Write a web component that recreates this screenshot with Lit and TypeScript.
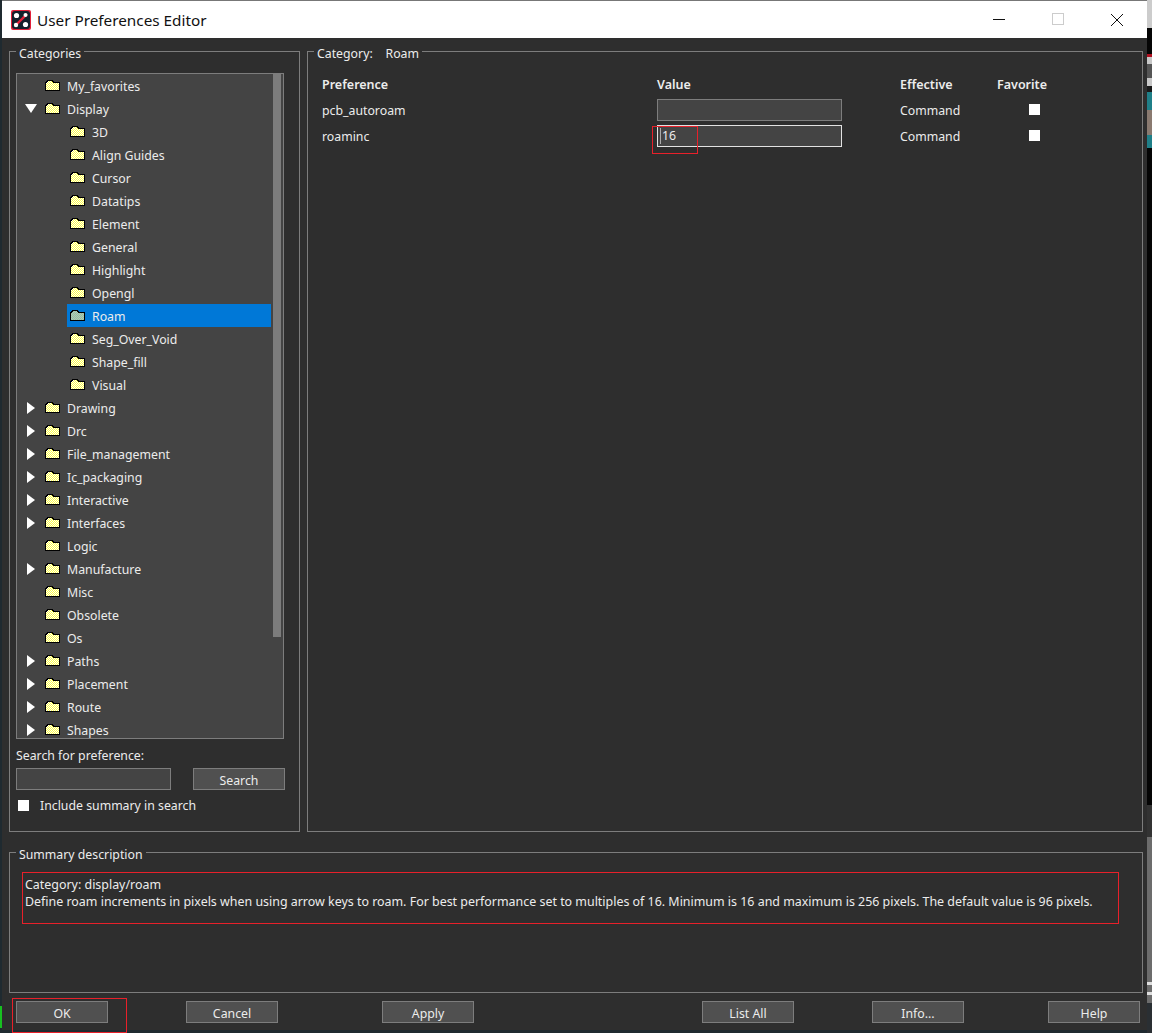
import { LitElement, html, css, svg } from 'lit';
import { customElement } from 'lit/decorators.js';

type Node = { label: string; depth: number; arrow?: 'open' | 'closed'; selected?: boolean };

const TREE: Node[] = [
  { label: 'My_favorites', depth: 0 },
  { label: 'Display', depth: 0, arrow: 'open' },
  { label: '3D', depth: 1 },
  { label: 'Align Guides', depth: 1 },
  { label: 'Cursor', depth: 1 },
  { label: 'Datatips', depth: 1 },
  { label: 'Element', depth: 1 },
  { label: 'General', depth: 1 },
  { label: 'Highlight', depth: 1 },
  { label: 'Opengl', depth: 1 },
  { label: 'Roam', depth: 1, selected: true },
  { label: 'Seg_Over_Void', depth: 1 },
  { label: 'Shape_fill', depth: 1 },
  { label: 'Visual', depth: 1 },
  { label: 'Drawing', depth: 0, arrow: 'closed' },
  { label: 'Drc', depth: 0, arrow: 'closed' },
  { label: 'File_management', depth: 0, arrow: 'closed' },
  { label: 'Ic_packaging', depth: 0, arrow: 'closed' },
  { label: 'Interactive', depth: 0, arrow: 'closed' },
  { label: 'Interfaces', depth: 0, arrow: 'closed' },
  { label: 'Logic', depth: 0 },
  { label: 'Manufacture', depth: 0, arrow: 'closed' },
  { label: 'Misc', depth: 0 },
  { label: 'Obsolete', depth: 0 },
  { label: 'Os', depth: 0 },
  { label: 'Paths', depth: 0, arrow: 'closed' },
  { label: 'Placement', depth: 0, arrow: 'closed' },
  { label: 'Route', depth: 0, arrow: 'closed' },
  { label: 'Shapes', depth: 0, arrow: 'closed' },
];

const BUTTONS = [
  { label: 'OK', gap: 78 },
  { label: 'Cancel', gap: 104 },
  { label: 'Apply', gap: 228 },
  { label: 'List All', gap: 78 },
  { label: 'Info...', gap: 84 },
  { label: 'Help', gap: 0 },
];

// the folders are dithered, two colours in a 2px checker
function folder(a: string, b: string, id: string) {
  return html`<svg class="folder" width="15" height="11" viewBox="0 0 15 11" shape-rendering="crispEdges">
    ${svg`<defs><pattern id="${id}" width="2" height="2" patternUnits="userSpaceOnUse">
      <rect width="2" height="2" fill="${a}"/><rect width="1" height="1" fill="${b}"/><rect x="1" y="1" width="1" height="1" fill="${b}"/>
    </pattern></defs>
    <path d="M.5 10.5V2.5H1.5V1.5H2.5V.5H7.5V1.5H8.5V2.5H14.5V10.5Z" fill="url(#${id})" stroke="#000"/>
    <path d="M1 10.5H15" stroke="#000"/>`}
  </svg>`;
}

function logo() {
  return html`<svg width="20" height="20" viewBox="0 0 20 20">
    <rect width="20" height="20" rx="2" fill="#e0203a"/>
    <rect x="1" y="1" width="18" height="18" rx="3" fill="#14202c"/>
    <path d="M4 16L16 4" stroke="#e8203a" stroke-width="2.4"/>
    <circle cx="5.5" cy="5.5" r="2.6" fill="#fff"/>
    <circle cx="14.5" cy="5" r="2" fill="#fff"/>
    <circle cx="5" cy="15" r="2.2" fill="#fff"/>
    <circle cx="14.5" cy="14.5" r="2.6" fill="#fff"/>
  </svg>`;
}

@customElement('app-root')
export class AppRoot extends LitElement {
  static styles = css`
    :host {
      display: block;
      position: relative;
      width: 1152px;
      height: 1033px;
      overflow: hidden;
      background: #1f2a30;
      font-family: "Noto Sans", "Open Sans", sans-serif;
      font-size: 12.3px;
      line-height: 18px;
      color: #ececec;
    }
    .window {
      width: 1145px;
      height: 1029px;
      margin-left: 2px;
      border-top: 1px solid #777;
      display: flex;
      flex-direction: column;
      background: #2e2e2e;
    }
    .titlebar {
      height: 37px;
      flex: none;
      background: #fff;
      color: #111;
      display: flex;
      align-items: center;
      padding-left: 9px;
      gap: 6px;
      font-size: 15.3px;
    }
    .titlebar .title { flex: 1; }
    .captions { display: flex; padding-right: 1px; }
    .caption {
      width: 59px;
      display: flex;
      justify-content: center;
    }
    .caption svg { display: block; }
    .content {
      flex: 1;
      padding: 1px 2px 0 7px;
      display: flex;
      flex-direction: column;
    }
    .top {
      display: flex;
      gap: 7px;
      height: 793px;
    }
    fieldset {
      margin: 0;
      border: 1px solid #7d7d7d;
      padding: 0;
      min-width: 0;
    }
    /* top padding drops the caption below the middle of the border line */
    legend {
      padding: 6px 3px 0;
      line-height: 18px;
    }
    .categories {
      width: 291px;
      height: 793px;
      box-sizing: border-box;
      padding: 10px 15px 0 6px;
    }
    .categories legend { margin-left: 0; }
    .category legend { margin-left: -8px; }
    .summary legend { margin-left: -9px; }
    .tree {
      height: 664px;
      border: 1px solid #7d7d7d;
      background: #444;
      position: relative;
      overflow: hidden;
    }
    .scrollbar {
      position: absolute;
      top: 0;
      right: 2px;
      width: 8px;
      height: 563px;
      background: #7c7c7c;
    }
    .row {
      height: 23px;
      display: flex;
      align-items: center;
      position: relative;
    }
    .arrow {
      width: 20px;
      margin-left: 8px;
      flex: none;
    }
    .arrow svg { display: block; }
    .arrow .closed { margin-left: 2px; }
    .folder { flex: none; display: block; margin-right: 7px; position: relative; }
    .label {
      flex: 1;
      height: 23px;
      line-height: 26px;
      white-space: nowrap;
      position: relative;
    }
    .highlight {
      position: absolute;
      left: 50px;
      width: 204px;
      top: 0;
      height: 23px;
      background: #0078d7;
    }
    .search-label { margin-top: 8px; }
    .search-row {
      display: flex;
      justify-content: space-between;
      margin: 3px -1px 0 0;
    }
    .input {
      box-sizing: border-box;
      border: 1px solid #7d7d7d;
      background: #444;
      height: 22px;
    }
    .search-input { width: 155px; }
    .btn {
      box-sizing: border-box;
      width: 92px;
      height: 22px;
      border: 1px solid #7d7d7d;
      background: #505050;
      text-align: center;
      line-height: 23px;
      flex: none;
    }
    .include {
      display: flex;
      align-items: center;
      gap: 11px;
      margin: 5px 0 0 2px;
      height: 20px;
    }
    .include .txt { padding-top: 2px; }
    .check {
      display: block;
      width: 11px;
      height: 11px;
      background: #fff;
      flex: none;
    }
    .category {
      width: 836px;
      height: 793px;
      box-sizing: border-box;
      padding: 11px 14px 0;
    }
    .grid {
      display: grid;
      grid-template-columns: 335px 243px 97px 60px;
      grid-template-rows: 23px 26px 26px;
      align-items: center;
    }
    .grid .head { font-weight: 600; font-size: 12.5px; align-self: start; margin-top: 2px; }
    .grid .txt { padding-top: 2px; }
    .grid .mid .check { margin: 0 0 2px 32px; }
    .value { width: 185px; }
    .value.active {
      border-color: #e2e2e2;
      display: flex;
      align-items: center;
      padding-left: 2px;
      line-height: 20px;
    }
    .caret { width: 1px; height: 16px; background: #aaa; margin-right: 1px; }
    .summary {
      height: 153px;
      margin-top: 8px;
      box-sizing: border-box;
      padding: 12px 15px 0;
      width: 1134px;
      flex: none;
    }
    .summary div { white-space: nowrap; line-height: 17px; font-size: 12.43px; }
    .footer {
      display: flex;
      margin-top: 8px;
      padding-left: 7px;
    }
    .mark {
      position: absolute;
      border: 1px solid #e8202a;
      box-sizing: border-box;
      pointer-events: none;
    }
    .mark.m1 { left: 652px; top: 126px; width: 46px; height: 28px; }
    .mark.m2 { left: 22px; top: 872px; width: 1097px; height: 52px; }
    .mark.m3 { left: 12px; top: 998px; width: 115px; height: 35px; }
    .greenbar { position: absolute; left: 0; top: 1006px; width: 2px; height: 22px; background: #18c020; }
    .edge {
      position: absolute;
      left: 1147px;
      top: 0;
      width: 5px;
      height: 1033px;
      background: linear-gradient(#ccc 0 28px, #050505 28px 54px, #b01020 54px 57px, #c8c8c8 57px 64px, #555 64px 78px, #c8c8c8 78px 86px, #1a1a1a 86px 92px, #1f7f88 92px 110px, #8a7a70 110px 135px, #1f7f88 135px 148px, #050505 148px 805px, #333 805px 837px, #6c6c6c 837px 982px, #ddd 982px 985px, #6c6c6c 985px 992px, #ddd 992px 995px, #6c6c6c 995px 1003px, #2a2f33 1003px);
    }
  `;

  private renderRow(n: Node, i: number) {
    const colors = n.selected ? ['#b4d0a8', '#90b8b0'] : ['#ffff44', '#ffffff'];
    return html`<div class="row" style="padding-left:${n.depth * 25}px">
      ${n.selected ? html`<div class="highlight"></div>` : ''}
      <span class="arrow">${n.arrow === 'open'
        ? html`<svg width="12" height="9"><path d="M0 0H12L6 9Z" fill="#fff"/></svg>`
        : n.arrow === 'closed'
          ? html`<svg class="closed" width="8" height="12"><path d="M0 0L8 6L0 12Z" fill="#fff"/></svg>`
          : ''}</span>
      ${folder(colors[0], colors[1], `dither${i}`)}
      <span class="label">${n.label}</span>
    </div>`;
  }

  render() {
    return html`
      <div class="window">
        <div class="titlebar">
          ${logo()}
          <span class="title">User Preferences Editor</span>
          <div class="captions">
            <span class="caption"><svg width="12" height="12"><path d="M0 6.5H12" stroke="#111"/></svg></span>
            <span class="caption"><svg width="12" height="12"><rect x=".5" y=".5" width="11" height="11" fill="none" stroke="#ccc"/></svg></span>
            <span class="caption"><svg width="14" height="14"><path d="M1 1L13 13M13 1L1 13" stroke="#111"/></svg></span>
          </div>
        </div>
        <div class="content">
          <div class="top">
            <fieldset class="categories">
              <legend>Categories</legend>
              <div class="tree">
                <div class="scrollbar"></div>
                ${TREE.map((n, i) => this.renderRow(n, i))}
              </div>
              <div class="search-label">Search for preference:</div>
              <div class="search-row">
                <div class="input search-input"></div>
                <div class="btn">Search</div>
              </div>
              <div class="include"><span class="check"></span><span class="txt">Include summary in search</span></div>
            </fieldset>
            <fieldset class="category">
              <legend>Category:&nbsp;&nbsp;&nbsp;&nbsp;Roam</legend>
              <div class="grid">
                <div class="head">Preference</div>
                <div class="head">Value</div>
                <div class="head">Effective</div>
                <div class="head">Favorite</div>
                <div class="txt">pcb_autoroam</div>
                <div class="input value"></div>
                <div class="txt">Command</div>
                <div class="mid"><span class="check"></span></div>
                <div class="txt">roaminc</div>
                <div class="input value active"><span class="caret"></span>16</div>
                <div class="txt">Command</div>
                <div class="mid"><span class="check"></span></div>
              </div>
            </fieldset>
          </div>
          <fieldset class="summary">
            <legend>Summary description</legend>
            <div>Category: display/roam</div>
            <div>Define roam increments in pixels when using arrow keys to roam. For best performance set to multiples of 16. Minimum is 16 and maximum is 256 pixels. The default value is 96 pixels.</div>
          </fieldset>
          <div class="footer">
            ${BUTTONS.map(b => html`<div class="btn" style="margin-right:${b.gap}px">${b.label}</div>`)}
          </div>
        </div>
      </div>
      <div class="mark m1"></div>
      <div class="mark m2"></div>
      <div class="mark m3"></div>
      <div class="greenbar"></div>
      <div class="edge"></div>
    `;
  }
}
